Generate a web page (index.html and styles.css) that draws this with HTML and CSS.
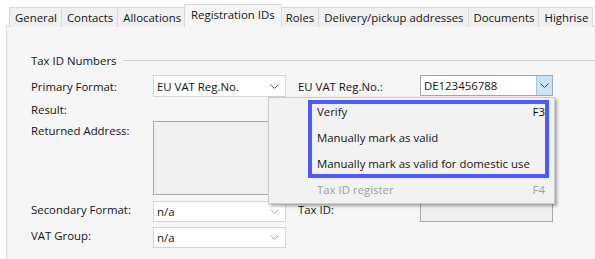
FILE: index.html
```html
<!DOCTYPE html>
<html lang="en">
<head>
  <meta charset="UTF-8">
  <title>Registration IDs</title>
  <link rel="stylesheet" href="styles.css">
</head>
<body>
  <!-- Tab strip -->
  <div class="tabs">
    <div class="tab">General</div>
    <div class="tab">Contacts</div>
    <div class="tab">Allocations</div>
    <div class="tab active">Registration IDs</div>
    <div class="tab">Roles</div>
    <div class="tab">Delivery/pickup addresses</div>
    <div class="tab">Documents</div>
    <div class="tab">Highrise</div>
  </div>

  <div class="panel">
    <div class="group-title">
      <span>Tax ID Numbers</span>
      <span class="group-line"></span>
    </div>

    <div class="form-grid">
      <label class="lbl r1">Primary Format:</label>
      <div class="combo r1 c2 dark">
        <span>EU VAT Reg.No.</span>
        <svg class="chev" width="9" height="6" viewBox="0 0 9 6"><path d="M0.5 0.5 L4.5 4.5 L8.5 0.5" fill="none" stroke="#606060"/></svg>
      </div>
      <label class="lbl r1 c4">EU VAT Reg.No.:</label>
      <div class="vat-input r1 c5">
        <span class="vat-text">DE123456788</span>
        <span class="vat-btn">
          <svg width="9" height="6" viewBox="0 0 9 6"><path d="M0.5 0.5 L4.5 4.5 L8.5 0.5" fill="none" stroke="#404040"/></svg>
        </span>
      </div>

      <label class="lbl r2">Result:</label>

      <label class="lbl r3 top">Returned Address:</label>
      <div class="address-box r3 c2"></div>

      <label class="lbl r4">Secondary Format:</label>
      <div class="combo r4 c2">
        <span>n/a</span>
        <svg class="chev" width="9" height="6" viewBox="0 0 9 6"><path d="M0.5 0.5 L4.5 4.5 L8.5 0.5" fill="none" stroke="#a8a8a8"/></svg>
      </div>
      <label class="lbl r4 c4">Tax ID:</label>
      <div class="readonly-box r4 c5"></div>

      <label class="lbl r5">VAT Group:</label>
      <div class="combo r5 c2">
        <span>n/a</span>
        <svg class="chev" width="9" height="6" viewBox="0 0 9 6"><path d="M0.5 0.5 L4.5 4.5 L8.5 0.5" fill="none" stroke="#a8a8a8"/></svg>
      </div>
    </div>
  </div>

  <!-- Context menu (open over the form) -->
  <div class="menu">
    <div class="menu-item"><span>Verify</span><span>F3</span></div>
    <div class="menu-item"><span>Manually mark as valid</span></div>
    <div class="menu-item"><span>Manually mark as valid for domestic use</span></div>
    <div class="menu-item disabled"><span>Tax ID register</span><span>F4</span></div>
    <div class="highlight"></div>
  </div>
</body>
</html>
```

FILE: styles.css
```css
:root {
  --text: #141414;
  --tab-border: #d9d9d9;
  --panel: #f6f6f6;
  --field-border: #d4d4d4;
  --box-border: #a9a9a9;
}
body {
  margin: 0;
  background: #fff;
  font-family: 'Open Sans', 'Noto Sans', Arial, sans-serif;
  font-size: 11.4px;
  color: var(--text);
  width: 595px;
  height: 259px;
  overflow: hidden;
  position: relative;
}
/* Tabs */
.tabs {
  display: flex;
  align-items: flex-end;
  height: 22px;
  padding: 5px 0 0 10px;
  position: relative;
  z-index: 1;
}
.tab {
  height: 19px;
  line-height: 19px;
  padding: 0 4px 0 5px;
  background: #f0f0f0;
  border: 1px solid var(--tab-border);
  border-bottom: none;
  margin-left: -1px;
  white-space: nowrap;
}
.tab.active {
  height: 22px;
  line-height: 20px;
  background: var(--panel);
  margin: 0 -1px 0 -2px;
  padding: 0 6px;
  position: relative;
  z-index: 2;
}
/* Panel */
.panel {
  margin-left: 6px;
  margin-top: -1px;
  border-top: 1px solid var(--tab-border);
  border-left: 1px solid var(--tab-border);
  background: var(--panel);
  height: 240px;
  padding-left: 24px;
}
.group-title {
  display: flex;
  align-items: center;
  padding-top: 25px;
  height: 16px;
}
.group-line {
  flex: 1;
  border-top: 1px solid #d0d0d0;
  margin-left: 6px;
}
.form-grid {
  display: grid;
  grid-template-columns: 122px 133px 12px 122px 133px;
  grid-template-rows: 22px 24px 75px 26px 26px;
  margin-top: 7px;
}
.lbl { align-self: center; white-space: nowrap; }
.lbl.top { align-self: start; line-height: 20px; }
.r1 { grid-row: 1; }
.r2 { grid-row: 2; }
.r3 { grid-row: 3; }
.r4 { grid-row: 4; }
.r5 { grid-row: 5; }
.c2 { grid-column: 2; }
.c4 { grid-column: 4; }
.c5 { grid-column: 5; }
.combo {
  height: 19px;
  align-self: end;
  background: #fff;
  border: 1px solid var(--field-border);
  display: flex;
  align-items: center;
  justify-content: space-between;
  padding: 0 6px 0 3px;
}
.r1.combo { align-self: start; height: 20px; }
.chev { margin-top: 1px; }
.vat-input {
  height: 19px;
  border: 1px solid #a6a6a6;
  background: #fff;
  display: flex;
  align-items: stretch;
}
.vat-text { flex: 1; padding-left: 3px; line-height: 19px; }
.vat-btn {
  width: 15px;
  background: #cce4f7;
  border-left: 1px solid #a6c8e6;
  display: flex;
  align-items: center;
  justify-content: center;
}
.address-box {
  background: #f0f0f0;
  border: 1px solid var(--box-border);
  height: 72px;
}
.readonly-box {
  background: #f0f0f0;
  border: 1px solid var(--box-border);
  height: 20px;
  align-self: end;
}
/* Context menu */
.menu {
  position: absolute;
  left: 268px;
  top: 97px;
  width: 285px;
  height: 105px;
  background: #f2f2f2;
  border: 1px solid #cccccc;
  box-shadow: 2px 2px 3px rgba(0, 0, 0, 0.35);
  z-index: 5;
}
.menu-item {
  height: 26px;
  display: flex;
  align-items: center;
  justify-content: space-between;
  padding: 0 9px 0 48px;
  white-space: nowrap;
}
.menu-item.disabled { color: #9f9f9f; }
.highlight {
  position: absolute;
  left: 39px;
  top: 2px;
  width: 233px;
  height: 70px;
  border: 4px solid #4c5bff;
}
```
